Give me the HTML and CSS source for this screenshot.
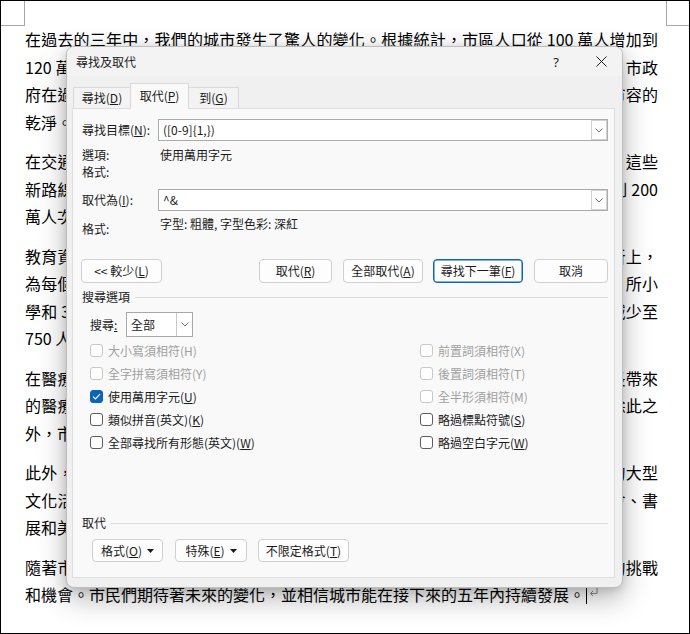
FILE: index.html
```html
<!DOCTYPE html>
<html lang="zh-Hant">
<head>
<meta charset="utf-8">
<title>尋找及取代</title>
<link rel="stylesheet" href="styles.css">
</head>
<body>
<div class="page">
  <div class="doc">
    <p>在過去的三年中，我們的城市發生了驚人的變化。根據統計，市區人口從 100 萬人增加到 120 萬人，增長幅度達到百分之二十，創下歷年來新高。為了因應快速增加的人口，市政府在過去三年中積極推動各項建設，包括興建新的住宅區、改善道路系統，並維護市容的乾淨。</p>
    <p>在交通方面，市政府新增了三條捷運路線和十二條公車路線，大幅改善了通勤品質。這些新路線每天載運的乘客人數遠遠超過了原先的預期，目前每日的平均載客量已經達到 200 萬人次，比三年前增加了將近一倍。</p>
    <p>教育資源也獲得了大幅度的提升，市政府投入大量經費在學校設備與教學環境的更新上，為每個學區增設了圖書館和電腦教室，同時也在新開發的三個重劃區中陸續新建了 5 所小學和 3 所中學，讓學生能夠就近入學，各區的候補學生人數也從原本的將近兩千人減少至 750 人左右，大幅提升了教育品質。</p>
    <p>在醫療方面，市立醫院新建了兩棟大樓並增聘了數百名醫護人員，以因應人口的增長帶來的醫療需求，急診病患的平均等候時間也從過去的四個多小時縮短為一個半小時。除此之外，市政府也積極推動社區長照服務據點的設置。</p>
    <p>此外，城市的文化生活也變得更加豐富多元，過去三年間市府共舉辦了超過五十場的大型文化活動，包括國際音樂節、街頭藝術節、電影節、美食節，以及創意市集、展覽會、書展和美術展等，吸引了大批市民與觀光客參與。</p>
    <p>隨著市區人口的持續增加，城市在住房、交通、環境保護等方面也面臨著前所未有的挑戰和機會。市民們期待著未來的變化，並相信城市能在接下來的五年內持續發展。<span class="caret"></span><svg class="pmark" width="9" height="10" viewBox="0 0 9 10"><path d="M8 0.5 V6.5 H1.5 M4 4 L1.5 6.5 L4 9" fill="none" stroke="#8a8a8a" stroke-width="1"/></svg></p>
  </div>

  <div class="dialog">
    <div class="titlebar">
      <span class="title">尋找及取代</span>
      <span class="help">?</span>
      <span class="close"><svg width="11" height="11" viewBox="0 0 11 11"><path d="M0.5 0.5 L10.5 10.5 M10.5 0.5 L0.5 10.5" stroke="#1b1b1b" stroke-width="1"/></svg></span>
    </div>
    <div class="tabs">
      <div class="tab first"><span>尋找(<u>D</u>)</span></div>
      <div class="tab active"><span>取代(<u>P</u>)</span></div>
      <div class="tab last"><span>到(<u>G</u>)</span></div>
    </div>
    <div class="panel">
      <div class="field">
        <span class="lbl">尋找目標(<u>N</u>):</span>
        <div class="combo"><span class="val">([0-9]{1,})</span><span class="drop"><svg width="8" height="5" viewBox="0 0 8 5"><path d="M0.5 0.5 L4 4 L7.5 0.5" fill="none" stroke="#707070" stroke-width="1"/></svg></span></div>
      </div>
      <div class="info"><span class="k">選項:</span><span>使用萬用字元</span></div>
      <div class="info"><span class="k">格式:</span><span></span></div>
      <div class="field field2">
        <span class="lbl">取代為(<u>I</u>):</span>
        <div class="combo"><span class="val">^&amp;</span><span class="drop"><svg width="8" height="5" viewBox="0 0 8 5"><path d="M0.5 0.5 L4 4 L7.5 0.5" fill="none" stroke="#707070" stroke-width="1"/></svg></span></div>
      </div>
      <div class="fmt"><span class="k">格式:</span><span class="v">字型: 粗體, 字型色彩: 深紅</span></div>
      <div class="actions">
        <button class="btn less"><span>&lt;&lt; 較少(<u>L</u>)</span></button>
        <div class="right">
          <button class="btn w73"><span>取代(<u>R</u>)</span></button>
          <button class="btn w80"><span>全部取代(<u>A</u>)</span></button>
          <button class="btn w90 default"><span>尋找下一筆(<u>F</u>)</span></button>
          <button class="btn w74"><span>取消</span></button>
        </div>
      </div>
      <div class="group">搜尋選項</div>
      <div class="searchrow">
        <span class="slbl">搜尋<u>:</u></span>
        <div class="select"><span class="val">全部</span><span class="sdrop"><svg width="8" height="5" viewBox="0 0 8 5"><path d="M0.5 0.5 L4 4 L7.5 0.5" fill="none" stroke="#707070" stroke-width="1"/></svg></span></div>
      </div>
      <div class="checks">
        <div class="chk dis"><span class="box"></span><span>大小寫須相符(H)</span></div>
        <div class="chk dis"><span class="box"></span><span>前置詞須相符(X)</span></div>
        <div class="chk dis"><span class="box"></span><span>全字拼寫須相符(Y)</span></div>
        <div class="chk dis"><span class="box"></span><span>後置詞須相符(T)</span></div>
        <div class="chk on"><span class="box"><svg width="9" height="7" viewBox="0 0 9 7"><path d="M1 3.6 L3.4 6 L8 1.2" fill="none" stroke="#fff" stroke-width="1.2"/></svg></span><span>使用萬用字元(<u>U</u>)</span></div>
        <div class="chk dis"><span class="box"></span><span>全半形須相符(M)</span></div>
        <div class="chk"><span class="box"></span><span>類似拼音(英文)(<u>K</u>)</span></div>
        <div class="chk"><span class="box"></span><span>略過標點符號(<u>S</u>)</span></div>
        <div class="chk"><span class="box"></span><span>全部尋找所有形態(英文)(<u>W</u>)</span></div>
        <div class="chk"><span class="box"></span><span>略過空白字元(<u>W</u>)</span></div>
      </div>
      <div class="bottom">
        <div class="group">取代</div>
        <div class="bbtns">
          <button class="btn w71"><span>格式(<u>O</u>)</span><svg class="tri" width="7" height="4" viewBox="0 0 7 4"><path d="M0 0 H7 L3.5 4 Z" fill="#1b1b1b"/></svg></button>
          <button class="btn w72"><span>特殊(<u>E</u>)</span><svg class="tri" width="7" height="4" viewBox="0 0 7 4"><path d="M0 0 H7 L3.5 4 Z" fill="#1b1b1b"/></svg></button>
          <button class="btn w91"><span>不限定格式(<u>T</u>)</span></button>
        </div>
      </div>
    </div>
  </div>
</div>
</body>
</html>
```

FILE: styles.css
```css
* { box-sizing: border-box; }
html, body { margin: 0; padding: 0; background: #fff; }
body { width: 690px; height: 634px; overflow: hidden; }

.page {
  position: relative;
  width: 690px;
  height: 634px;
  border: 1px solid #000;
  background: #fff;
  overflow: hidden;
}
.page::before {
  content: "";
  position: absolute;
  left: 0; top: 0;
  width: 23px; height: 24px;
  border-right: 1px solid #a6a6a6;
  border-bottom: 1px solid #a6a6a6;
}
.page::after {
  content: "";
  position: absolute;
  right: 0; top: 0;
  width: 22px; height: 24px;
  border-left: 1px solid #a6a6a6;
  border-bottom: 1px solid #a6a6a6;
}

.doc {
  padding: 25px 0 0 24px;
  font-family: "Noto Sans CJK TC", "Noto Sans CJK JP", sans-serif;
  font-size: 16px;
  line-height: 27.5px;
  color: #000;
}
.doc p {
  margin: 0 0 12px;
  width: 633px;
  text-align: justify;
}
.caret {
  display: inline-block;
  width: 1px;
  height: 16px;
  background: #000;
  vertical-align: -3px;
  margin-left: 1px;
}
.pmark { vertical-align: 4px; margin-left: 2px; }

/* dialog */
.dialog {
  position: absolute;
  left: 65px;
  top: 45px;
  width: 557px;
  height: 542px;
  background: #f0f0f0;
  border: 1px solid #bdbdbd;
  border-radius: 8px;
  box-shadow: 0 10px 28px rgba(0,0,0,0.30), 0 2px 8px rgba(0,0,0,0.12);
  font-family: "Noto Sans CJK TC", "Noto Sans CJK JP", sans-serif;
  font-size: 12px;
  line-height: 16px;
  color: #1b1b1b;
  display: flex;
  flex-direction: column;
  overflow: hidden;
}
.titlebar {
  height: 29px;
  display: flex;
  align-items: center;
  padding: 0 6px 0 9px;
  background: #f3f3f3;
}
.title { flex: 1; }
.help {
  width: 20px;
  text-align: center;
  font-family: "Noto Sans", sans-serif;
  font-size: 13px;
}
.close {
  width: 30px;
  margin-left: 20px;
  display: flex;
  justify-content: center;
  align-items: center;
}

.tabs {
  height: 32px;
  display: flex;
  align-items: flex-end;
  padding-left: 6px;
  position: relative;
  z-index: 1;
}
.tab {
  height: 21px;
  display: flex;
  align-items: center;
  justify-content: center;
  border: 1px solid #dadada;
  border-bottom: none;
  background: #f3f3f3;
}
.tab.first { width: 57px; border-right: none; }
.tab.active { width: 59px; height: 26px; margin-bottom: -1px; background: #f9f9f9; padding-bottom: 1px; }
.tab.last { width: 50px; border-left: none; }

.panel {
  margin-left: 5px;
  width: 543px;
  height: 470px;
  border: 1px solid #dedede;
  background: #f9f9f9;
  padding: 10px 6px 15px 9px;
  display: flex;
  flex-direction: column;
}

.field {
  display: grid;
  grid-template-columns: 76px 1fr;
  align-items: center;
}
.field2 { margin-top: 9px; }
.combo {
  height: 22px;
  border: 1px solid #acacac;
  background: #fff;
  display: flex;
  align-items: center;
  padding-left: 4px;
}
.drop {
  margin-left: auto;
  width: 16px;
  height: 20px;
  border: 1px solid #d2d2d2;
  background: #fff;
  display: flex;
  align-items: center;
  justify-content: center;
}

.info {
  display: grid;
  grid-template-columns: 78px 1fr;
  line-height: 17px;
  margin-top: 5px;
}
.info + .info { margin-top: 0; }

.fmt {
  display: grid;
  grid-template-columns: 78px 1fr;
  margin-top: 5px;
}
.fmt .k { padding-top: 5px; }

.actions {
  margin-top: 22px;
  display: flex;
}
.right {
  margin-left: auto;
  display: flex;
  gap: 10px;
}
.right .w73 { margin-right: 1px; }
.right .w90 { margin-right: 1px; }

.btn {
  height: 24px;
  border: 1px solid #d0d0d0;
  border-radius: 4px;
  background: #fdfdfd;
  font-family: inherit;
  font-size: 12px;
  line-height: 16px;
  color: #1b1b1b;
  padding: 0;
  display: flex;
  align-items: center;
  justify-content: center;
}
.less { width: 81px; margin-left: -1px; }
.w73 { width: 73px; }
.w80 { width: 80px; }
.w90 { width: 90px; }
.w74 { width: 74px; }
.default { border-color: #0a64b8; box-shadow: inset 0 0 0 0.5px #0a64b8; }

.group {
  display: flex;
  align-items: center;
  gap: 5px;
  margin-top: 6px;
  line-height: 16px;
}
.group::after {
  content: "";
  flex: 1;
  height: 1px;
  background: #dcdcdc;
}

.searchrow {
  margin-top: 7px;
  height: 25px;
  display: flex;
  align-items: center;
  padding-left: 8px;
}
.slbl { width: 36px; }
.select {
  width: 67px;
  height: 25px;
  border: 1px solid #a8a8a8;
  background: #fff;
  display: flex;
  align-items: center;
  padding-left: 4px;
}
.sdrop {
  margin-left: auto;
  width: 16px;
  height: 100%;
  border-left: 1px solid #c8c8c8;
  display: flex;
  align-items: center;
  justify-content: center;
}

.checks {
  margin-top: 2px;
  padding-left: 8px;
  display: grid;
  grid-template-columns: 330px 1fr;
  grid-auto-rows: 23px;
}
.chk {
  display: flex;
  align-items: center;
  gap: 5px;
}
.box {
  width: 13px;
  height: 13px;
  border: 1px solid #5d5d5d;
  border-radius: 3px;
  background: #fff;
  flex: none;
  display: flex;
  align-items: center;
  justify-content: center;
}
.chk.dis { color: #a0a0a0; }
.chk.dis .box { border-color: #c8c8c8; }
.chk.on .box { background: #0a64b8; border-color: #0a64b8; }

.bottom { margin-top: auto; }
.bottom .group { margin-top: 0; }
.bbtns {
  margin-top: 8px;
  padding-left: 10px;
  display: flex;
}
.bbtns .btn { height: 23px; }
.w71 { width: 71px; margin-right: 12px; }
.w72 { width: 72px; margin-right: 11px; }
.w91 { width: 91px; }
.tri { margin-left: 5px; }
```
